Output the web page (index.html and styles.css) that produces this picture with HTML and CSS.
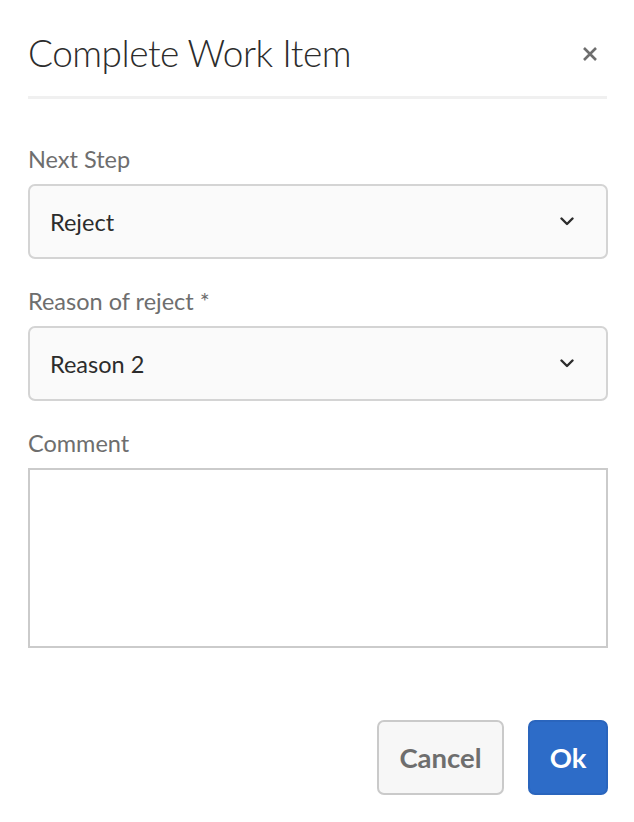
FILE: index.html
```html
<!DOCTYPE html>
<html lang="en">
<head>
<meta charset="utf-8">
<title>Complete Work Item</title>
<link rel="stylesheet" href="styles.css">
</head>
<body>
<div class="dialog">
  <header class="dialog-header">
    <h1 class="dialog-title">Complete Work Item</h1>
    <button class="close-btn" aria-label="Close">
      <svg width="16" height="16" viewBox="0 0 16 16"><path d="M2 2 L14 14 M14 2 L2 14" stroke="#6e6e6e" stroke-width="2.6" stroke-linecap="butt" fill="none"/></svg>
    </button>
  </header>
  <div class="divider"></div>
  <form class="dialog-body">
    <div class="field">
      <label class="field-label">Next Step</label>
      <div class="select">
        <span class="select-value">Reject</span>
        <svg class="chevron" width="14" height="9" viewBox="0 0 14 9"><path d="M1.5 1.5 L7 7 L12.5 1.5" stroke="#2c2c2c" stroke-width="2.4" fill="none" stroke-linecap="round" stroke-linejoin="round"/></svg>
      </div>
    </div>
    <div class="field">
      <label class="field-label">Reason of reject *</label>
      <div class="select">
        <span class="select-value">Reason 2</span>
        <svg class="chevron" width="14" height="9" viewBox="0 0 14 9"><path d="M1.5 1.5 L7 7 L12.5 1.5" stroke="#2c2c2c" stroke-width="2.4" fill="none" stroke-linecap="round" stroke-linejoin="round"/></svg>
      </div>
    </div>
    <div class="field">
      <label class="field-label">Comment</label>
      <div class="textarea"></div>
    </div>
  </form>
  <footer class="dialog-footer">
    <button class="btn btn-secondary">Cancel</button>
    <button class="btn btn-primary">Ok</button>
  </footer>
</div>
</body>
</html>
```

FILE: styles.css
```css
html, body {
  margin: 0;
  padding: 0;
  background: #ffffff;
}
body {
  font-family: Lato, "Open Sans", sans-serif;
  width: 634px;
  height: 822px;
  overflow: hidden;
}
.dialog {
  padding: 0 26px 0 28px;
  display: flex;
  flex-direction: column;
}
.dialog-header {
  display: flex;
  align-items: center;
  justify-content: space-between;
  height: 96px;
}
.dialog-title {
  margin: 0;
  font-weight: 300;
  font-size: 37px;
  letter-spacing: -0.5px;
  color: #2c2c2c;
  line-height: 1;
  padding-top: 8px;
}
.close-btn {
  border: 0;
  background: none;
  padding: 0;
  width: 16px;
  height: 16px;
  margin-right: 10px;
  margin-top: 12px;
  display: flex;
}
.divider {
  height: 3px;
  background: #f0f0f0;
  margin-right: 1px;
}
.dialog-body {
  display: flex;
  flex-direction: column;
  gap: 31px;
  padding-top: 49px;
  margin: 0;
}
.field {
  display: flex;
  flex-direction: column;
}
.field-label {
  font-size: 23.5px;
  line-height: 22px;
  color: #6e6e6e;
  margin-bottom: 14px;
}
.select {
  box-sizing: border-box;
  height: 75px;
  border: 2px solid #d4d4d4;
  border-radius: 7px;
  background: #fafafa;
  display: flex;
  align-items: center;
  justify-content: space-between;
  padding: 0 32px 0 20px;
}
.select-value {
  font-size: 23.5px;
  color: #2c2c2c;
}
.chevron {
  display: block;
}
.textarea {
  box-sizing: border-box;
  height: 180px;
  border: 2px solid #cbcbcb;
  background: #ffffff;
}
.dialog-footer {
  display: flex;
  justify-content: flex-end;
  gap: 24px;
  padding-top: 72px;
}
.btn {
  box-sizing: border-box;
  height: 75px;
  border-radius: 7px;
  font-family: Lato, "Open Sans", sans-serif;
  font-weight: 700;
  font-size: 27.5px;
  padding: 0;
}
.btn-secondary {
  width: 127px;
  background: #f7f7f7;
  border: 2px solid #cacaca;
  color: #6e6e6e;
}
.btn-primary {
  width: 80px;
  background: #2d6cc8;
  border: 2px solid #2a65bd;
  color: #ffffff;
}
```
